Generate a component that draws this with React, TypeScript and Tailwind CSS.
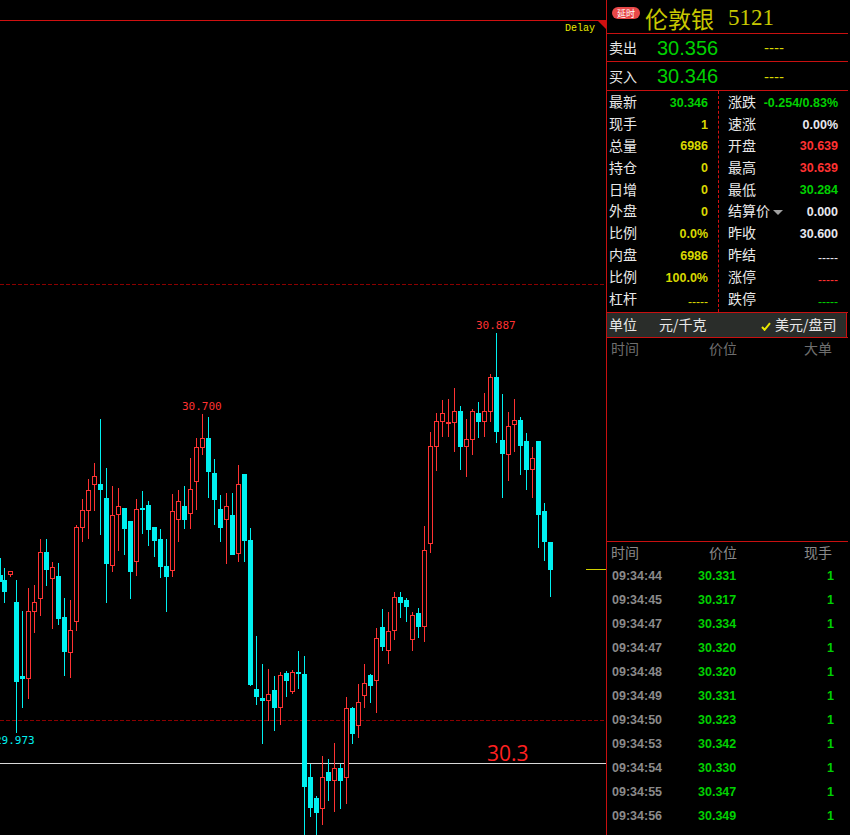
import React from "react";

type Candle = [number, "r" | "c", number, number, number, number];

// x of the wick, colour, wick top, wick bottom, body top, body bottom
const candles: Candle[] = [
  [0, "c", 558, 582, 575, 582],
  [4, "c", 568, 603, 580, 592],
  [10, "r", 571, 577, 571, 575],
  [16, "c", 580, 733, 602, 682],
  [22, "c", 611, 708, 676, 679],
  [28, "r", 588, 699, 611, 679],
  [34, "r", 585, 633, 602, 612],
  [40, "r", 539, 616, 552, 599],
  [46, "c", 539, 586, 552, 570],
  [52, "r", 562, 629, 567, 579],
  [58, "c", 563, 625, 576, 619],
  [64, "c", 598, 676, 617, 652],
  [70, "r", 600, 678, 630, 653],
  [76, "r", 525, 631, 527, 622],
  [82, "r", 499, 542, 510, 528],
  [88, "r", 479, 539, 490, 511],
  [94, "r", 463, 511, 476, 485],
  [100, "c", 419, 535, 484, 490],
  [106, "c", 468, 603, 498, 564],
  [112, "r", 486, 572, 515, 566],
  [118, "r", 488, 551, 506, 515],
  [124, "c", 508, 555, 508, 529],
  [130, "c", 521, 599, 521, 572],
  [136, "r", 499, 576, 509, 562],
  [142, "c", 491, 534, 508, 510],
  [148, "c", 501, 546, 505, 530],
  [154, "c", 527, 557, 527, 541],
  [160, "c", 529, 578, 539, 567],
  [166, "c", 539, 612, 566, 577],
  [172, "r", 494, 577, 511, 571],
  [178, "r", 490, 542, 501, 520],
  [184, "c", 486, 529, 506, 520],
  [190, "r", 458, 529, 489, 514],
  [196, "r", 438, 510, 447, 482],
  [202, "r", 414, 455, 438, 448],
  [208, "c", 417, 498, 438, 472],
  [214, "c", 459, 525, 473, 500],
  [220, "c", 495, 542, 509, 528],
  [226, "r", 493, 564, 506, 520],
  [232, "c", 493, 555, 515, 555],
  [238, "r", 465, 562, 484, 554],
  [244, "c", 474, 562, 474, 541],
  [250, "c", 528, 686, 540, 685],
  [256, "c", 636, 705, 689, 697],
  [262, "c", 664, 744, 698, 701],
  [268, "r", 669, 721, 694, 701],
  [274, "c", 676, 731, 690, 708],
  [280, "r", 672, 725, 675, 708],
  [286, "c", 671, 697, 673, 681],
  [292, "r", 670, 694, 672, 692],
  [298, "c", 651, 689, 672, 674],
  [304, "c", 656, 835, 674, 787],
  [310, "c", 764, 817, 777, 808],
  [316, "c", 796, 835, 798, 813],
  [322, "r", 756, 825, 777, 809],
  [328, "c", 759, 801, 772, 781],
  [334, "r", 743, 812, 768, 781],
  [340, "c", 764, 809, 768, 781],
  [346, "r", 697, 804, 708, 778],
  [352, "c", 707, 744, 708, 734],
  [358, "r", 684, 738, 702, 726],
  [364, "r", 664, 708, 683, 696],
  [370, "c", 674, 703, 675, 686],
  [376, "r", 628, 713, 638, 681],
  [382, "c", 609, 651, 627, 647],
  [388, "r", 612, 664, 631, 651],
  [394, "r", 592, 640, 597, 631],
  [400, "c", 592, 618, 597, 603],
  [406, "c", 598, 622, 600, 607],
  [412, "r", 612, 651, 615, 640],
  [418, "c", 608, 638, 613, 627],
  [424, "r", 526, 642, 550, 627],
  [430, "r", 432, 553, 446, 544],
  [436, "r", 413, 471, 421, 447],
  [442, "r", 400, 437, 413, 422],
  [448, "r", 399, 437, 422, 424],
  [454, "r", 388, 452, 411, 423],
  [460, "c", 406, 470, 411, 447],
  [466, "r", 419, 477, 439, 447],
  [472, "r", 409, 455, 411, 440],
  [478, "c", 402, 438, 413, 422],
  [484, "r", 393, 437, 411, 422],
  [490, "r", 374, 422, 377, 412],
  [496, "c", 333, 443, 377, 432],
  [502, "c", 394, 498, 440, 454],
  [508, "r", 412, 481, 426, 455],
  [514, "r", 399, 452, 420, 425],
  [520, "c", 417, 475, 420, 446],
  [526, "c", 433, 490, 441, 470],
  [532, "r", 447, 498, 458, 470],
  [538, "c", 441, 548, 441, 515],
  [544, "c", 503, 561, 511, 542],
  [550, "c", 542, 597, 542, 570],
];

const RED = "#ff3232";
const CYAN = "#00f0f0";

function CandleChart() {
  return (
    <svg width="606" height="835" className="absolute left-0 top-0" shapeRendering="crispEdges">
      {/* price grid */}
      <line x1="0" x2="606" y1="284.5" y2="284.5" stroke="#8c0000" strokeDasharray="4 2" />
      <line x1="0" x2="606" y1="720.5" y2="720.5" stroke="#8c0000" strokeDasharray="4 2" />
      <line x1="0" x2="606" y1="763.5" y2="763.5" stroke="#d8d8d8" />
      {/* last price tick */}
      <line x1="586" x2="606" y1="569.5" y2="569.5" stroke="#d0d000" />
      {candles.map(([x, kind, wt, wb, bt, bb]) => {
        const color = kind === "r" ? RED : CYAN;
        const flat = bb - bt <= 3;
        return (
          <g key={x}>
            <rect x={x} y={wt} width="1" height={wb - wt} fill={color} />
            {kind === "c" || flat ? (
              <rect x={x - 2} y={bt} width="5" height={bb - bt} fill={color} />
            ) : (
              <rect x={x - 1.5} y={bt + 0.5} width="4" height={bb - bt - 1} fill="#000" stroke={color} />
            )}
          </g>
        );
      })}
    </svg>
  );
}

function Chart() {
  return (
    <div className="relative h-[835px] w-[606px] shrink-0 overflow-hidden">
      <CandleChart />
      <div className="absolute left-0 top-[20px] h-px w-[606px] bg-[#d01010]" />
      <div className="absolute right-0 top-[20px] h-0 w-0 border-l-[9px] border-t-[9px] border-l-transparent border-t-[#d01010]" />
      <span className="absolute left-[565px] top-[23px] font-['Liberation_Mono',monospace] text-[10px] leading-[12px] text-[#e8e800]">
        Delay
      </span>
      <span className="absolute left-[476px] top-[319px] font-['DejaVu_Sans_Mono',monospace] text-[11px] leading-[14px] text-[#ff3232]">
        30.887
      </span>
      <span className="absolute left-[182px] top-[400px] font-['DejaVu_Sans_Mono',monospace] text-[11px] leading-[14px] text-[#ff3232]">
        30.700
      </span>
      <span className="absolute left-[-5px] top-[734px] font-['DejaVu_Sans_Mono',monospace] text-[11px] leading-[14px] text-[#00f0f0]">
        29.973
      </span>
      <span className="absolute left-[487px] top-[741px] font-['Open_Sans',sans-serif] text-[21px] leading-[24px] text-[#ff2020]">
        30.3
      </span>
    </div>
  );
}

const YELLOW = "text-[#d8d800]";

const leftStats: [string, string, string][] = [
  ["最新", "30.346", "text-[#00d000]"],
  ["现手", "1", YELLOW],
  ["总量", "6986", YELLOW],
  ["持仓", "0", YELLOW],
  ["日增", "0", YELLOW],
  ["外盘", "0", YELLOW],
  ["比例", "0.0%", YELLOW],
  ["内盘", "6986", YELLOW],
  ["比例", "100.0%", YELLOW],
  ["杠杆", "-----", YELLOW],
];

const rightStats: [string, string, string][] = [
  ["涨跌", "-0.254/0.83%", "text-[#00d000]"],
  ["速涨", "0.00%", "text-[#e8e8f0]"],
  ["开盘", "30.639", "text-[#ff3232]"],
  ["最高", "30.639", "text-[#ff3232]"],
  ["最低", "30.284", "text-[#00d000]"],
  ["结算价", "0.000", "text-[#e8e8f0]"],
  ["昨收", "30.600", "text-[#e8e8f0]"],
  ["昨结", "-----", "text-[#e8e8f0]"],
  ["涨停", "-----", "text-[#ff3232]"],
  ["跌停", "-----", "text-[#00d000]"],
];

const trades: [string, string][] = [
  ["09:34:44", "30.331"],
  ["09:34:45", "30.317"],
  ["09:34:47", "30.334"],
  ["09:34:47", "30.320"],
  ["09:34:48", "30.320"],
  ["09:34:49", "30.331"],
  ["09:34:50", "30.323"],
  ["09:34:53", "30.342"],
  ["09:34:54", "30.330"],
  ["09:34:55", "30.347"],
  ["09:34:56", "30.349"],
  ["09:34:57", "30.346"],
];

const cjk = "font-['Noto_Sans_CJK_SC',sans-serif]";
const num = "font-['Liberation_Sans',sans-serif]";

function StatRow({ label, value, color, caret }: { label: string; value: string; color: string; caret?: boolean }) {
  const isDash = value.startsWith("--");
  return (
    <div className="flex h-[21.9px] items-center justify-between">
      <span className={`${cjk} flex items-center pb-[2px] text-[14px] leading-none text-[#e8e8e8]`}>
        {label}
        {caret && <span className="ml-[3px] mt-[5px] h-0 w-0 border-x-[5px] border-t-[5px] border-x-transparent border-t-[#a0a0a0]" />}
      </span>
      {isDash ? (
        <span className={`${num} pt-[6px] text-[12px] leading-none ${color}`}>{value}</span>
      ) : (
        <span className={`${num} pt-[2px] text-[12.5px] font-bold leading-none ${color}`}>{value}</span>
      )}
    </div>
  );
}

function Quote({ label, price, height }: { label: string; price: string; height: string }) {
  return (
    <div className={`flex ${height} shrink-0 items-center border-b border-[#c81010] pl-[2px]`}>
      <span className={`${cjk} w-[48px] pb-[1px] text-[14px] leading-none text-[#e8e8e8]`}>{label}</span>
      <span className={`${num} w-[107px] text-[20px] leading-none text-[#00d000]`}>{price}</span>
      <span className={`${num} text-[15px] leading-none text-[#d8d800]`}>----</span>
    </div>
  );
}

function SidePanel() {
  return (
    <div className="flex h-[835px] w-[244px] shrink-0 flex-col overflow-hidden border-l border-[#c81010] pr-[2px]">
      <div className="flex h-[34px] shrink-0 items-center border-b border-[#c81010] pl-[5px] pt-[2px]">
        <span className={`${cjk} mb-[9px] flex h-[12px] w-[28px] items-center justify-center rounded-full bg-[#e84848] text-[9px] leading-none text-white`}>
          延时
        </span>
        <span className={`${cjk} ml-[5px] text-[23px] leading-[28px] text-[#c8c800]`}>伦敦银</span>
        <span className="ml-[14px] font-['Liberation_Serif',serif] text-[23px] leading-[28px] text-[#c8c800]">5121</span>
      </div>
      <Quote label="卖出" price="30.356" height="h-[28px]" />
      <Quote label="买入" price="30.346" height="h-[29px]" />
      <div className="flex h-[222px] shrink-0 border-b border-[#c81010]">
        <div className="w-[112px] shrink-0 border-r border-dashed border-[#d01010] pl-[2px] pr-[10px]">
          {leftStats.map(([l, v, c], i) => (
            <StatRow key={i} label={l} value={v} color={c} />
          ))}
        </div>
        <div className="w-[119px] shrink-0 pl-[9px]">
          {rightStats.map(([l, v, c], i) => (
            <StatRow key={i} label={l} value={v} color={c} caret={l === "结算价"} />
          ))}
        </div>
      </div>
      <div className="flex h-[25px] shrink-0 border-b border-[#c81010]">
        <div className={`${cjk} flex flex-1 items-center border-r border-[#c81010] bg-[#2a2d2a] pb-[2px] pl-[2px] text-[14px] leading-none text-[#e8e8e8]`}>
          <span className="w-[50px]">单位</span>
          <span className="w-[102px]">元/千克</span>
          <svg width="10" height="9" viewBox="0 0 10 9" className="mr-[4px] mt-[4px]">
            <path d="M1 5 L3.6 7.8 L9 1.2" fill="none" stroke="#e8e800" strokeWidth="2" />
          </svg>
          <span>美元/盘司</span>
        </div>
        <div className="w-px shrink-0 bg-black" />
      </div>
      <div className={`${cjk} flex h-[204px] shrink-0 border-b border-[#c81010] pl-[4px] pt-[1px] text-[14px] leading-[18px] text-[#6e6e6e]`}>
        <span className="w-[98px]">时间</span>
        <span className="w-[95px]">价位</span>
        <span>大单</span>
      </div>
      <div className={`${cjk} flex h-[21px] shrink-0 pl-[4px] pt-[1px] text-[14px] leading-[18px] text-[#8a8a8a]`}>
        <span className="w-[98px]">时间</span>
        <span className="w-[95px]">价位</span>
        <span>现手</span>
      </div>
      <div className="flex flex-col pt-px">
        {trades.map(([t, p], i) => (
          <div key={i} className={`${num} flex h-[24px] shrink-0 items-center text-[12.5px] font-bold leading-none`}>
            <span className="w-[91px] shrink-0 pl-[5px] text-[#8a8a8a]">{t}</span>
            <span className="w-[129px] shrink-0 text-[#00d000]">{p}</span>
            <span className="text-[#00d000]">1</span>
          </div>
        ))}
      </div>
    </div>
  );
}

export default function App() {
  return (
    <div className="flex h-[835px] w-[850px] overflow-hidden bg-black">
      <Chart />
      <SidePanel />
    </div>
  );
}
